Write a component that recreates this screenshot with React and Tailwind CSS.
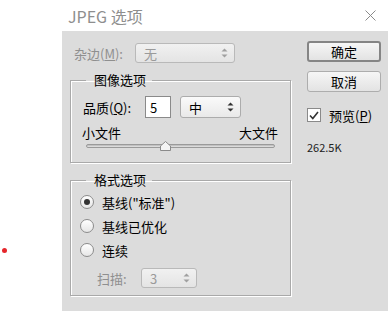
const FONT = { fontFamily: '"Microsoft YaHei", "Noto Sans CJK SC", "Noto Sans", sans-serif' };

const Arrows = ({ color = "#333" }) => (
  <svg width="7" height="10" viewBox="0 0 7 10" className="shrink-0">
    <path d="M3.5 0.5 L6.5 3.5 L0.5 3.5 Z" fill={color} />
    <path d="M0.5 6.5 L6.5 6.5 L3.5 9.5 Z" fill={color} />
  </svg>
);

const Select = ({ value, disabled, className = "" }) => (
  <div
    className={`flex items-center justify-between rounded-[3px] border pl-[8px] pr-[6px] ${
      disabled
        ? "border-[#b9b9b9] bg-gradient-to-b from-[#f1f1f1] to-[#e4e4e4] text-[#9a9a9a]"
        : "border-[#acacac] bg-gradient-to-b from-[#fafafa] to-[#e9e9e9] text-black"
    } ${className}`}
  >
    <span className="text-[13px] leading-none">{value}</span>
    <Arrows color={disabled ? "#a0a0a0" : "#333"} />
  </div>
);

const Group = ({ title, className = "", children }) => (
  <fieldset
    className={`w-[221px] border border-[#a9a9a9] shadow-[1px_1px_0_#fff,inset_1px_1px_0_#fff] ${className}`}
  >
    <legend className="ml-[15px] pl-[8px] pr-[6px] text-[13px] leading-[18px] text-black">
      {title}
    </legend>
    {children}
  </fieldset>
);

const Radio = ({ checked, label }) => (
  <div className="flex h-[24px] items-center gap-[8px] pl-[9px]">
    <div className="flex h-[14px] w-[14px] items-center justify-center rounded-full border border-[#8c8c8c] bg-gradient-to-b from-[#ffffff] to-[#e6e6e6]">
      {checked && <div className="h-[6px] w-[6px] rounded-full bg-[#333]" />}
    </div>
    <span className="text-[13px] leading-none text-black">{label}</span>
  </div>
);

const Button = ({ children, primary, className = "" }) => (
  <div
    className={`flex h-[21px] w-[74px] items-center justify-center rounded-[3px] bg-gradient-to-b from-[#f6f6f6] to-[#e3e3e3] text-[13px] leading-none text-black ${
      primary ? "border-2 border-[#858585]" : "border border-[#adadad]"
    } ${className}`}
  >
    {children}
  </div>
);

export default function App() {
  return (
    <div className="flex h-[311px] w-[388px] flex-col overflow-hidden bg-white" style={FONT}>
      {/* title bar */}
      <div className="flex h-[31px] items-center justify-between pl-[68px] pr-[12px]">
        <span className="text-[16px] leading-none text-[#8e8e8e]">JPEG 选项</span>
        <svg width="11" height="11" viewBox="0 0 11 11">
          <path d="M0.5 0.5 L10.5 10.5 M10.5 0.5 L0.5 10.5" stroke="#8a8a8a" strokeWidth="1" />
        </svg>
      </div>

      <div className="flex flex-1">
        {/* blank area left of dialog */}
        <div className="w-[62px]">
          <div className="ml-[2px] mt-[217px] h-[5px] w-[5px] rounded-full bg-[#e5262b]" />
        </div>

        {/* dialog body */}
        <div className="flex flex-1 bg-[#dcdcdc]">
          <div className="ml-[8px] flex flex-col">
            <div className="ml-[4px] mt-[12px] flex h-[20px] items-center">
              <span className="w-[61px] text-[13px] leading-none text-[#8f8f8f]">
                杂边(<span className="underline">M</span>):
              </span>
              <Select value="无" disabled className="h-[20px] w-[100px]" />
            </div>

            <Group title="图像选项" className="mt-[8px] pb-[11px]">
              <div className="mt-[7px] flex items-center pl-[12px]">
                <span className="w-[62px] text-[13px] leading-none text-black">
                  品质(<span className="underline">Q</span>):
                </span>
                <div className="flex h-[22px] w-[26px] items-center border border-[#8a8a8a] bg-white pl-[4px] text-[13px] leading-none text-black">
                  5
                </div>
                <Select value="中" className="ml-[9px] h-[22px] w-[61px]" />
              </div>
              <div className="mt-[6px] flex h-[16px] items-center justify-between pl-[11px] pr-[12px] text-[13px] leading-none text-black">
                <span>小文件</span>
                <span>大文件</span>
              </div>
              <div className="relative ml-[15px] mt-[1px] h-[10px] w-[189px]">
                <div className="absolute left-0 right-0 top-[3px] h-[4px] rounded-full border border-[#9a9a9a] bg-gradient-to-b from-[#b5b5b5] to-[#e8e8e8]" />
                <svg width="11" height="10" viewBox="0 0 11 10" className="absolute left-[74px] top-0">
                  <path d="M5.5 0.5 L10.5 5 L10.5 9.5 L0.5 9.5 L0.5 5 Z" fill="#f4f4f4" stroke="#8a8a8a" />
                </svg>
              </div>
            </Group>

            <Group title="格式选项" className="mt-[8px] pb-[7px]">
              <div className="mt-[1px] flex flex-col">
                <Radio checked label="基线(&quot;标准&quot;)" />
                <Radio label="基线已优化" />
                <Radio label="连续" />
              </div>
              <div className="mt-[6px] flex items-center pl-[26px]">
                <span className="w-[44px] text-[13px] leading-none text-[#8f8f8f]">扫描:</span>
                <Select value="3" disabled className="h-[20px] w-[56px]" />
              </div>
            </Group>
          </div>

          <div className="ml-[16px] flex flex-col">
            <Button primary className="mt-[10px]">确定</Button>
            <Button className="mt-[9px]">取消</Button>
            <div className="mt-[15px] flex h-[16px] items-center gap-[8px]">
              <div className="flex h-[14px] w-[14px] items-center justify-center border border-[#8a8a8a] bg-white">
                <svg width="10" height="9" viewBox="0 0 10 9">
                  <path d="M1 4.5 L3.8 7.5 L9 1" fill="none" stroke="#333" strokeWidth="1.6" />
                </svg>
              </div>
              <span className="text-[13px] leading-none text-black">
                预览(<span className="underline">P</span>)
              </span>
            </div>
            <div className="mt-[17px] h-[14px] text-[11px] leading-[14px] text-[#222]">262.5K</div>
          </div>
        </div>
      </div>
    </div>
  );
}
